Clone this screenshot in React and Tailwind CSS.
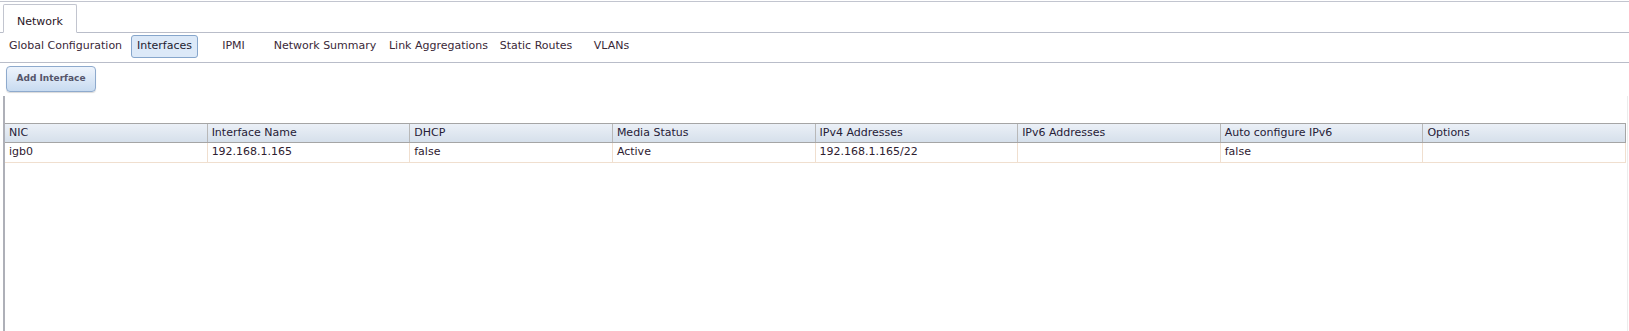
import React from 'react';

const font = { fontFamily: '"DejaVu Sans", Verdana, sans-serif' };

const subTabs = [
  { label: 'Global Configuration', w: 'w-[121px]' },
  { label: 'Interfaces', w: 'w-[67px]', active: true },
  { label: 'IPMI', w: 'w-[67px]' },
  { label: 'Network Summary', w: 'w-[116px]' },
  { label: 'Link Aggregations', w: 'w-[111px]' },
  { label: 'Static Routes', w: 'w-[84px]' },
  { label: 'VLANs', w: 'w-[67px]' }
];

const columns = [
  'NIC',
  'Interface Name',
  'DHCP',
  'Media Status',
  'IPv4 Addresses',
  'IPv6 Addresses',
  'Auto configure IPv6',
  'Options'
];

const rows = [
  ['igb0', '192.168.1.165', 'false', 'Active', '192.168.1.165/22', '', 'false', '']
];

function App() {
  return (
    <div className="w-[1629px] h-[331px] bg-white overflow-hidden text-[11px] text-[#2e2030]" style={font}>
      {/* top tab strip */}
      <div className="mt-px border-t border-[#c2c5cf] h-[32px] flex items-end pl-[3px] border-b border-b-[#b9bdc9]">
        <div className="w-[74px] h-[29px] -mb-px bg-white border border-[#c2c5cf] border-b-white rounded-t-[2px] flex justify-center pt-[9px] text-[#2a1525]">
          Network
        </div>
      </div>

      {/* sub tabs */}
      <div className="h-[30px] flex items-start pt-[2px] pl-[5px] border-b border-[#b9bdc9]">
        {subTabs.map((t, i) => (
          <div
            key={t.label}
            className={
              t.w +
              ' h-[23px] flex items-center justify-center whitespace-nowrap ' +
              (i === 1 ? 'ml-[5px] ' : i === 2 ? 'ml-[2px] ' : '') +
              (t.active
                ? 'bg-[#dce9f8] border border-[#86a6cc] rounded-[3px] text-[#1c1c30]'
                : 'border border-transparent text-[#3a2838]')
            }
          >
            {t.label}
          </div>
        ))}
      </div>

      {/* toolbar */}
      <div className="h-[33px] pl-[6px] pt-[3px]">
        <button className="w-[90px] h-[26px] rounded-[4px] border border-[#8eaacd] bg-gradient-to-b from-[#eef4fc] to-[#c8dbf0] shadow-[0_1px_1px_rgba(0,0,0,0.15)] font-bold text-[9px] text-[#55556a]">
          Add Interface
        </button>
      </div>

      {/* table panel */}
      <div className="ml-[3px] mr-px h-[236px] border-l-2 border-[#aeb0b8] border-r border-r-[#ececec] pt-[27px]">
        <div className="grid grid-cols-8 h-[20px] border-y border-[#a5a5a5] bg-gradient-to-b from-[#ebf0f7] to-[#d6e0eb] mr-px">
          {columns.map((c, i) => (
            <div
              key={c}
              className={
                'flex items-center pl-[4px] text-[#262036] ' +
                (i < columns.length - 1 ? 'border-r border-[#b8b8b8]' : 'border-r border-[#a5a5a5]')
              }
            >
              {c}
            </div>
          ))}
        </div>
        {rows.map((r, ri) => (
          <div key={ri} className="grid grid-cols-8 h-[20px] border-b border-[#f0dfcf] mr-px">
            {r.map((v, i) => (
              <div key={i} className="flex items-center pl-[4px] border-r border-[#f0dfcf]">
                {v}
              </div>
            ))}
          </div>
        ))}
      </div>
    </div>
  );
}

export default App;
